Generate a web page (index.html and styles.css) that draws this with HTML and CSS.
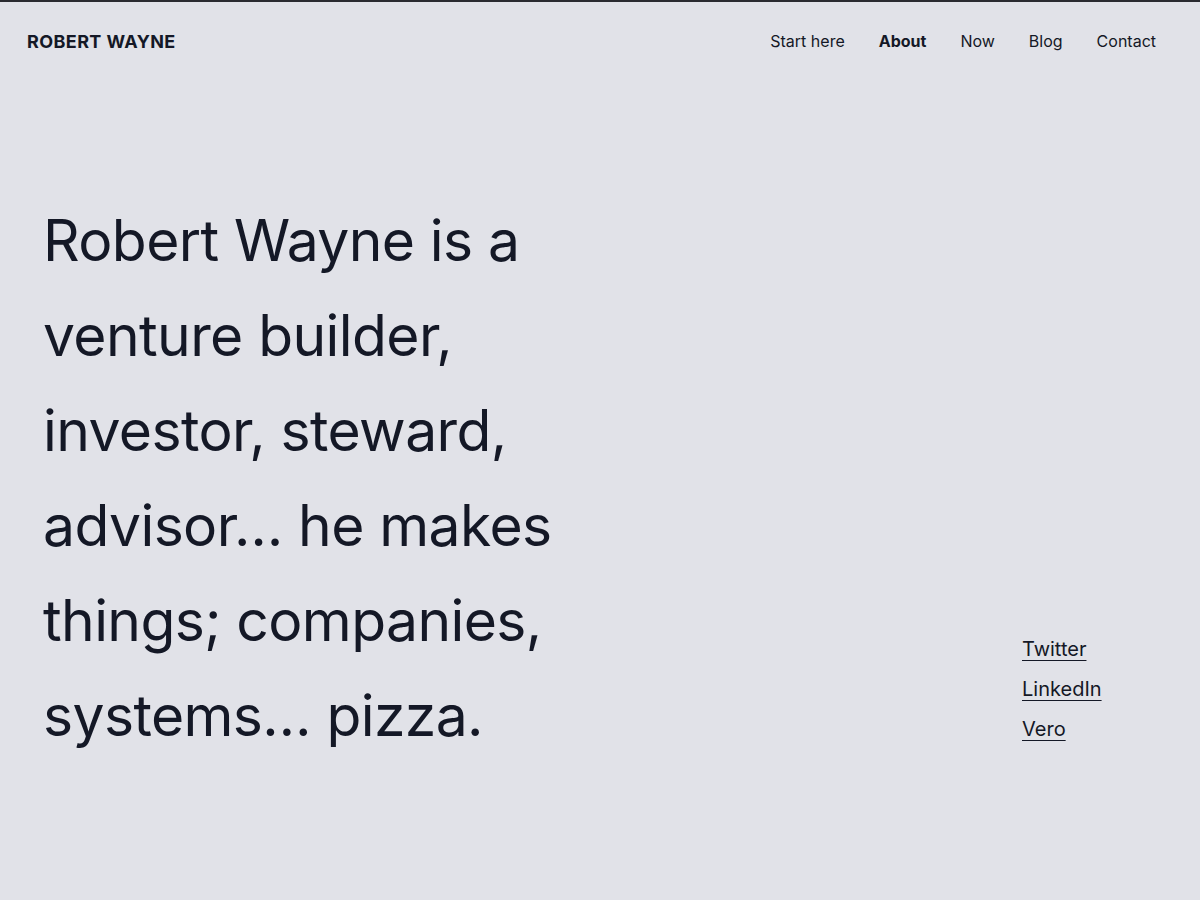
FILE: index.html
```html
<!DOCTYPE html>
<html lang="en">
<head>
    <meta charset="UTF-8">
    <meta name="viewport" content="width=device-width, initial-scale=1.0">
    <title>Robert Wayne</title>
    <link rel="stylesheet" href="styles.css">
</head>
<body>
    <header class="site-header">
        <a class="brand" href="#">ROBERT WAYNE</a>
        <nav class="main-nav">
            <a href="#">Start here</a>
            <a href="#" class="active">About</a>
            <a href="#">Now</a>
            <a href="#">Blog</a>
            <a href="#">Contact</a>
        </nav>
    </header>

    <main class="intro">
        <h1 class="intro-text">Robert Wayne is a venture builder, investor, steward, advisor… he makes things; companies, systems… pizza.</h1>
        <ul class="social">
            <li><a href="#">Twitter</a></li>
            <li><a href="#">LinkedIn</a></li>
            <li><a href="#">Vero</a></li>
        </ul>
    </main>
</body>
</html>
```

FILE: styles.css
```css
body {
    margin: 0;
    min-height: 900px;
    background-color: #e1e2e8;
    border-top: 2px solid #2a2b30;
    box-sizing: border-box;
    font-family: Inter, "Noto Sans", Arial, sans-serif;
    color: #141826;
}
a {
    color: inherit;
    text-decoration: none;
}
.site-header {
    display: flex;
    justify-content: space-between;
    align-items: center;
    height: 78px;
    padding: 0 44px 0 27px;
}
.brand {
    font-size: 18px;
    font-weight: 700;
    letter-spacing: 0.4px;
}
.main-nav {
    display: flex;
    gap: 34px;
    font-size: 16px;
}
.main-nav .active {
    font-weight: 700;
}
.intro {
    display: flex;
    justify-content: space-between;
    align-items: last baseline;
    padding: 113px 43px 0 43px;
}
.intro-text {
    width: 540px;
    margin: 0;
    font-size: 57px;
    font-weight: 400;
    line-height: 95px;
    letter-spacing: -0.6px;
}
.social {
    list-style: none;
    margin: 0;
    padding: 0;
    width: 135px;
    font-size: 20px;
    line-height: 40px;
}
.social a {
    text-decoration: underline;
    text-decoration-thickness: 1px;
    text-underline-offset: 4px;
}
```
